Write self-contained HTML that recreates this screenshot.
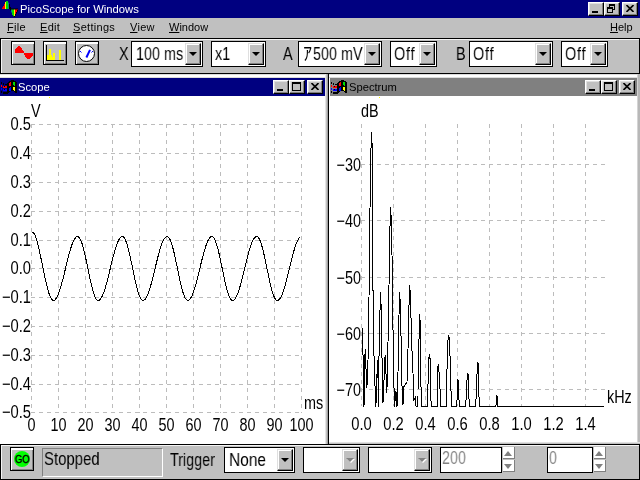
<!DOCTYPE html>
<html><head><meta charset="utf-8"><title>PicoScope for Windows</title>
<style>
html,body{margin:0;padding:0}
body{width:640px;height:480px;overflow:hidden;background:#c0c0c0;position:relative;font-family:"Liberation Sans","Noto Sans CJK JP",sans-serif;color:#000}
div,span,i,svg{position:absolute;box-sizing:content-box}
.sm{font-size:11px;line-height:13px;white-space:nowrap;will-change:transform}
.big{font-size:18px;line-height:20px;white-space:nowrap;transform:scaleX(.8);transform-origin:0 0;will-change:transform}
.menu u{text-decoration:underline;text-decoration-thickness:1px;text-underline-offset:1px}
.tb{background:#c0c0c0;border:1px solid;border-color:#fff #000 #000 #fff;box-shadow:inset -1px -1px 0 #808080,inset 1px 1px 0 #dfdfdf;width:14px;height:12px}
.frame{border:1px solid #000;box-shadow:inset 1px 1px 0 #f4f4f4}
.btn{width:22px;height:22px;border:1px solid #000;background:#c0c0c0;box-shadow:inset 1px 2px 0 #fff,inset -1px -1px 0 #808080}
.combo{border:1px solid #000;background:#fff}
.ddb{width:14px;background:#c0c0c0;border:1px solid;border-color:#dfdfdf #000 #000 #dfdfdf;box-shadow:inset -1px -1px 0 #808080,inset 1px 1px 0 #fff}
.ddb i{left:3px;top:50%;margin-top:-2px;width:0;height:0;border:4px solid transparent;border-top:4px solid #000;border-bottom:0}
.spin{width:12px;height:12px;background:#fff;box-shadow:inset -1px -1px 0 #808080}
.spin i{left:2px;top:3px;width:0;height:0;border:4px solid transparent}
</style></head><body>

<div style="left:0;top:0;width:640px;height:18px;background:#000080"></div>
<svg style="left:0;top:0" width="20" height="18" viewBox="0 0 20 18"><rect x="2" y="7.5" width="1" height="1.5" fill="#f00"/><rect x="3" y="6" width="1" height="3" fill="#f00"/><rect x="4" y="4" width="1" height="5" fill="#f00"/><rect x="5" y="2" width="1" height="7" fill="#ff0"/><rect x="6" y="1" width="1" height="8" fill="#0d0"/><rect x="7" y="1" width="1" height="8" fill="#0d0"/><rect x="8" y="2.5" width="1" height="6.5" fill="#088"/><rect x="9" y="4" width="1" height="5" fill="#000"/><rect x="10" y="7" width="1" height="2" fill="#000"/><rect x="10" y="9" width="1" height="1.5" fill="#000"/><rect x="11" y="9" width="1" height="3.5" fill="#088"/><rect x="12" y="9" width="1" height="6" fill="#0d0"/><rect x="13" y="9" width="1" height="7.5" fill="#0d0"/><rect x="14" y="9" width="1" height="7" fill="#ff0"/><rect x="15" y="9" width="1" height="5" fill="#f00"/><rect x="16" y="9" width="1" height="3" fill="#f00"/><rect x="17" y="9" width="1" height="1" fill="#f00"/><rect x="13" y="16.5" width="1" height="0.5" fill="#000"/><rect x="14" y="16" width="1" height="1" fill="#000"/><rect x="15" y="14" width="1" height="1.5" fill="#000"/><rect x="16" y="12" width="1" height="1.5" fill="#000"/><rect x="17" y="10" width="1" height="1.5" fill="#000"/><rect x="10" y="8.5" width="8" height="1" fill="#000"/></svg>
<span class="sm" style="left:20px;top:3px;color:#fff;font-size:11.25px">PicoScope for Windows</span>
<div class="tb" style="left:588px;top:2px"><div style="left:3px;top:8px;width:6px;height:2px;background:#000"></div></div>
<div class="tb" style="left:604px;top:2px"><div style="left:4px;top:1px;width:4px;height:3px;border:1px solid #000;border-top-width:2px"></div><div style="left:2px;top:4px;width:4px;height:3px;border:1px solid #000;border-top-width:2px;background:#c0c0c0"></div></div>
<div class="tb" style="left:622px;top:2px"><svg style="left:3px;top:2px" width="8" height="7" viewBox="0 0 8 7"><path d="M0.5,0 L7.5,7 M7.5,0 L0.5,7" stroke="#000" stroke-width="1.6"/></svg></div>
<span class="sm menu" style="left:7px;top:21px;letter-spacing:.3px;"><u>F</u>ile</span>
<span class="sm menu" style="left:40px;top:21px;letter-spacing:.3px;"><u>E</u>dit</span>
<span class="sm menu" style="left:73px;top:21px;letter-spacing:.3px;"><u>S</u>ettings</span>
<span class="sm menu" style="left:130px;top:21px;letter-spacing:.3px;"><u>V</u>iew</span>
<span class="sm menu" style="left:169px;top:21px;"><u>W</u>indow</span>
<span class="sm menu" style="left:610px;top:21px;"><u>H</u>elp</span>
<div class="frame" style="left:0;top:38px;width:638px;height:34px"></div>
<div class="btn" style="left:11px;top:41px"><svg style="left:0;top:0" width="22" height="22" viewBox="12 42 22 22" shape-rendering="crispEdges"><path d="M15,53 L15,50 L18,46 L20,46 L24,52 L24,53Z M24,53 L33,53 L33,55 L30,59 L27,59 L24,54Z" fill="#f00"/></svg></div>
<div class="btn" style="left:43px;top:41px"><svg style="left:0;top:0" width="22" height="22" viewBox="44 42 22 22" shape-rendering="crispEdges"><path d="M46.5,45 V60.5 H64" fill="none" stroke="#000" stroke-width="1"/><path d="M47,60 V55 H49 V49 H51 V55 H52 V57 H53 V53 H55 V60Z M59,60 V50 H61 V60Z" fill="#ff0"/></svg></div>
<div class="btn" style="left:75px;top:41px"><svg style="left:0;top:0" width="22" height="22" viewBox="76 42 22 22"><circle cx="86.5" cy="53.5" r="8" fill="#fff" stroke="#000" stroke-width="1"/><path d="M86.4,57.5 L90,49.8" stroke="#00f" stroke-width="2"/><path d="M80,51 L81.5,52.5 M93,51 L91.5,52.5" stroke="#00f" stroke-width="1"/></svg></div>
<span class="big" style="left:119px;top:44px">X</span>
<span class="big" style="left:283px;top:44px">A</span>
<span class="big" style="left:456px;top:44px">B</span>
<div class="combo" style="left:131px;top:41px;width:70px;height:24px"><span class="big" style="left:4px;top:2px;">100 ms</span><div class="ddb" style="left:53px;top:1px;height:20px"><i style="border-top-color:#000"></i></div></div>
<div class="combo" style="left:211px;top:41px;width:53px;height:24px"><span class="big" style="left:3px;top:2px;">x1</span><div class="ddb" style="left:36px;top:1px;height:20px"><i style="border-top-color:#000"></i></div></div>
<div class="combo" style="left:298px;top:41px;width:82px;height:24px"><span class="big" style="left:4px;top:2px;transform:none">ｱ</span><span class="big" style="left:14px;top:2px;">500 mV</span><div class="ddb" style="left:65px;top:1px;height:20px"><i style="border-top-color:#000"></i></div></div>
<div class="combo" style="left:390px;top:41px;width:45px;height:24px"><span class="big" style="left:3px;top:2px;letter-spacing:1px">Off</span><div class="ddb" style="left:28px;top:1px;height:20px"><i style="border-top-color:#000"></i></div></div>
<div class="combo" style="left:469px;top:41px;width:82px;height:24px"><span class="big" style="left:3px;top:2px;letter-spacing:1px">Off</span><div class="ddb" style="left:65px;top:1px;height:20px"><i style="border-top-color:#000"></i></div></div>
<div class="combo" style="left:561px;top:41px;width:45px;height:24px"><span class="big" style="left:3px;top:2px;letter-spacing:1px">Off</span><div class="ddb" style="left:28px;top:1px;height:20px"><i style="border-top-color:#000"></i></div></div>
<div style="left:0;top:74px;width:640px;height:370px;background:#fff"></div>
<div style="left:0;top:74px;width:640px;height:1px;background:#dcdcdc"></div>
<div style="left:0;top:77px;width:640px;height:1px;background:#dcdcdc"></div>
<div style="left:0;top:78px;width:325px;height:18px;background:#000080"></div>
<div style="left:325px;top:74px;width:1px;height:370px;background:#e4e4e4"></div>
<div style="left:326px;top:74px;width:1px;height:370px;background:#c0c0c0"></div>
<div style="left:327px;top:74px;width:1px;height:370px;background:#a0a0a0"></div>
<div style="left:328px;top:74px;width:1px;height:370px;background:#000"></div>
<div style="left:330px;top:78px;width:307px;height:18px;background:#808080"></div>
<div style="left:637px;top:74px;width:1px;height:370px;background:#d4d4d4"></div>
<div style="left:638px;top:74px;width:2px;height:370px;background:#b8b8b8"></div>
<div style="left:329px;top:442px;width:311px;height:1px;background:#e0e0e0"></div>
<div style="left:329px;top:443px;width:311px;height:1px;background:#c0c0c0"></div>
<svg style="left:0px;top:78px" width="18" height="18" viewBox="0 0 18 18" shape-rendering="crispEdges">
<path d="M7,5 L8,4 L10,3 L11,2 L13,2 L15,3 L17,5 L17,16 L16,15 L14,14 L13,13 L11,13 L9,14 L8,15 L7,16 L3,16 L3,15 L7,15Z" fill="#000"/>
<path d="M9,5 L10,4 L11,4 L11,7 L10,8 L9,8Z" fill="#f00"/><path d="M13,4 L14,4 L15,5 L15,8 L14,8 L13,7Z" fill="#0d0"/>
<path d="M9,10 L10,9 L11,9 L11,12 L10,13 L9,13Z" fill="#00f"/><path d="M13,9 L14,9 L15,10 L15,13 L14,13 L13,12Z" fill="#ff0"/>
<rect x="1" y="4" width="1" height="2" fill="#000"/><rect x="1" y="7" width="1" height="2" fill="#f00"/><rect x="1" y="10" width="1" height="2" fill="#00f"/><rect x="1" y="13" width="1" height="2" fill="#000"/>
<rect x="3" y="5" width="1" height="2" fill="#000"/><rect x="5" y="6" width="2" height="1" fill="#000"/>
<rect x="3" y="8" width="4" height="2" fill="#f00"/><rect x="3" y="11" width="4" height="2" fill="#00f"/>
<rect x="4" y="8" width="1" height="1" fill="#000"/><rect x="4" y="11" width="1" height="1" fill="#000"/>
<rect x="3" y="14" width="4" height="2" fill="#000"/>
</svg>
<svg style="left:330px;top:78px" width="18" height="18" viewBox="0 0 18 18" shape-rendering="crispEdges">
<path d="M7,5 L8,4 L10,3 L11,2 L13,2 L15,3 L17,5 L17,16 L16,15 L14,14 L13,13 L11,13 L9,14 L8,15 L7,16 L3,16 L3,15 L7,15Z" fill="#000"/>
<path d="M9,5 L10,4 L11,4 L11,7 L10,8 L9,8Z" fill="#f00"/><path d="M13,4 L14,4 L15,5 L15,8 L14,8 L13,7Z" fill="#0d0"/>
<path d="M9,10 L10,9 L11,9 L11,12 L10,13 L9,13Z" fill="#00f"/><path d="M13,9 L14,9 L15,10 L15,13 L14,13 L13,12Z" fill="#ff0"/>
<rect x="1" y="4" width="1" height="2" fill="#000"/><rect x="1" y="7" width="1" height="2" fill="#f00"/><rect x="1" y="10" width="1" height="2" fill="#00f"/><rect x="1" y="13" width="1" height="2" fill="#000"/>
<rect x="3" y="5" width="1" height="2" fill="#000"/><rect x="5" y="6" width="2" height="1" fill="#000"/>
<rect x="3" y="8" width="4" height="2" fill="#f00"/><rect x="3" y="11" width="4" height="2" fill="#00f"/>
<rect x="4" y="8" width="1" height="1" fill="#000"/><rect x="4" y="11" width="1" height="1" fill="#000"/>
<rect x="3" y="14" width="4" height="2" fill="#000"/>
</svg>
<span class="sm" style="left:18px;top:81px;color:#fff;font-size:11.2px">Scope</span>
<span class="sm" style="left:349px;top:81px;color:#000;font-size:11.2px">Spectrum</span>
<div class="tb" style="left:273px;top:80px"><div style="left:3px;top:8px;width:6px;height:2px;background:#000"></div></div><div class="tb" style="left:289px;top:80px"><div style="left:2px;top:1px;width:7px;height:6px;border:1px solid #000;border-top-width:2px"></div></div><div class="tb" style="left:307px;top:80px"><svg style="left:3px;top:2px" width="8" height="7" viewBox="0 0 8 7"><path d="M0.5,0 L7.5,7 M7.5,0 L0.5,7" stroke="#000" stroke-width="1.6"/></svg></div>
<div class="tb" style="left:585px;top:80px"><div style="left:3px;top:8px;width:6px;height:2px;background:#000"></div></div><div class="tb" style="left:601px;top:80px"><div style="left:2px;top:1px;width:7px;height:6px;border:1px solid #000;border-top-width:2px"></div></div><div class="tb" style="left:619px;top:80px"><svg style="left:3px;top:2px" width="8" height="7" viewBox="0 0 8 7"><path d="M0.5,0 L7.5,7 M7.5,0 L0.5,7" stroke="#000" stroke-width="1.6"/></svg></div>
<div style="left:49px;top:97px;width:1px;height:1px;background:#ff0"></div>
<div style="left:379px;top:97px;width:1px;height:1px;background:#ff0"></div>
<svg style="left:0;top:0;will-change:transform" width="640" height="480" viewBox="0 0 640 480" font-family="Liberation Sans, sans-serif" font-size="18" fill="#000">
<g stroke="#bcbcbc" stroke-width="1" stroke-dasharray="4 4" shape-rendering="crispEdges" fill="none">
<path d="M31,124.5 H302"/>
<path d="M31,153.5 H302"/>
<path d="M31,182.5 H302"/>
<path d="M31,211.5 H302"/>
<path d="M31,240.5 H302"/>
<path d="M31,268.5 H302"/>
<path d="M31,297.5 H302"/>
<path d="M31,326.5 H302"/>
<path d="M31,355.5 H302"/>
<path d="M31,384.5 H302"/>
<path d="M31,412.5 H302"/>
<path d="M31.5,124 V413"/>
<path d="M58.5,124 V413"/>
<path d="M85.5,124 V413"/>
<path d="M112.5,124 V413"/>
<path d="M139.5,124 V413"/>
<path d="M166.5,124 V413"/>
<path d="M193.5,124 V413"/>
<path d="M220.5,124 V413"/>
<path d="M247.5,124 V413"/>
<path d="M274.5,124 V413"/>
<path d="M301.5,124 V413"/>
<path d="M361.5,124 V406"/>
<path d="M393.5,124 V406"/>
<path d="M425.5,124 V406"/>
<path d="M457.5,124 V406"/>
<path d="M489.5,124 V406"/>
<path d="M521.5,124 V406"/>
<path d="M553.5,124 V406"/>
<path d="M585.5,124 V406"/>
<path d="M361,164.5 H605"/>
<path d="M361,220.5 H605"/>
<path d="M361,277.5 H605"/>
<path d="M361,333.5 H605"/>
<path d="M361,389.5 H605"/>
</g>
<text transform="translate(31,130) scale(0.82,1)" text-anchor="end">0.5</text>
<text transform="translate(31,159) scale(0.82,1)" text-anchor="end">0.4</text>
<text transform="translate(31,188) scale(0.82,1)" text-anchor="end">0.3</text>
<text transform="translate(31,217) scale(0.82,1)" text-anchor="end">0.2</text>
<text transform="translate(31,246) scale(0.82,1)" text-anchor="end">0.1</text>
<text transform="translate(31,274) scale(0.82,1)" text-anchor="end">0.0</text>
<text transform="translate(31,303) scale(0.82,1)" text-anchor="end">−0.1</text>
<text transform="translate(31,332) scale(0.82,1)" text-anchor="end">−0.2</text>
<text transform="translate(31,361) scale(0.82,1)" text-anchor="end">−0.3</text>
<text transform="translate(31,390) scale(0.82,1)" text-anchor="end">−0.4</text>
<text transform="translate(31,418) scale(0.82,1)" text-anchor="end">−0.5</text>
<text transform="translate(31.5,431) scale(0.8,1)" text-anchor="middle">0</text>
<text transform="translate(58.5,431) scale(0.8,1)" text-anchor="middle">10</text>
<text transform="translate(85.5,431) scale(0.8,1)" text-anchor="middle">20</text>
<text transform="translate(112.5,431) scale(0.8,1)" text-anchor="middle">30</text>
<text transform="translate(139.5,431) scale(0.8,1)" text-anchor="middle">40</text>
<text transform="translate(166.5,431) scale(0.8,1)" text-anchor="middle">50</text>
<text transform="translate(193.5,431) scale(0.8,1)" text-anchor="middle">60</text>
<text transform="translate(220.5,431) scale(0.8,1)" text-anchor="middle">70</text>
<text transform="translate(247.5,431) scale(0.8,1)" text-anchor="middle">80</text>
<text transform="translate(274.5,431) scale(0.8,1)" text-anchor="middle">90</text>
<text transform="translate(301.5,431) scale(0.8,1)" text-anchor="middle">100</text>
<text transform="translate(31,117) scale(0.8,1)" text-anchor="start">V</text>
<text transform="translate(304,409) scale(0.8,1)" text-anchor="start">ms</text>
<polyline fill="none" stroke="#000" stroke-width="1" shape-rendering="crispEdges" points="31.5,232.0 32.5,232.1 33.5,232.8 34.5,234.3 35.5,236.4 36.5,239.3 37.5,242.7 38.5,246.7 39.5,251.3 40.5,256.1 41.5,260.8 42.5,265.6 43.5,270.5 44.5,275.3 45.5,280.0 46.5,284.4 47.5,288.4 48.5,292.0 49.5,295.0 50.5,297.4 51.5,299.2 52.5,300.2 53.5,300.5 54.5,300.2 55.5,299.3 56.5,297.9 57.5,296.1 58.5,293.7 59.5,291.0 60.5,287.8 61.5,284.4 62.5,280.6 63.5,276.7 64.5,272.6 65.5,268.5 66.5,264.3 67.5,260.2 68.5,256.3 69.5,252.6 70.5,249.1 71.5,246.0 72.5,243.2 73.5,240.9 74.5,239.0 75.5,237.7 76.5,236.8 77.5,236.5 78.5,236.8 79.5,237.9 80.5,239.6 81.5,242.0 82.5,245.1 83.5,248.7 84.5,252.7 85.5,257.1 86.5,261.8 87.5,266.6 88.5,271.5 89.5,276.3 90.5,280.9 91.5,285.3 92.5,289.2 93.5,292.7 94.5,295.6 95.5,297.9 96.5,299.5 97.5,300.3 98.5,300.5 99.5,300.0 100.5,299.1 101.5,297.6 102.5,295.6 103.5,293.2 104.5,290.3 105.5,287.1 106.5,283.6 107.5,279.8 108.5,275.8 109.5,271.7 110.5,267.5 111.5,263.4 112.5,259.4 113.5,255.5 114.5,251.8 115.5,248.4 116.5,245.3 117.5,242.7 118.5,240.4 119.5,238.7 120.5,237.4 121.5,236.7 122.5,236.5 123.5,237.0 124.5,238.2 125.5,240.1 126.5,242.7 127.5,245.8 128.5,249.5 129.5,253.7 130.5,258.1 131.5,262.9 132.5,267.7 133.5,272.6 134.5,277.4 135.5,281.9 136.5,286.2 137.5,290.0 138.5,293.4 139.5,296.1 140.5,298.3 141.5,299.7 142.5,300.4 143.5,300.4 144.5,299.9 145.5,298.8 146.5,297.2 147.5,295.1 148.5,292.6 149.5,289.6 150.5,286.3 151.5,282.7 152.5,278.9 153.5,274.9 154.5,270.8 155.5,266.6 156.5,262.5 157.5,258.5 158.5,254.6 159.5,251.0 160.5,247.7 161.5,244.7 162.5,242.1 163.5,240.0 164.5,238.4 165.5,237.2 166.5,236.6 167.5,236.5 168.5,237.2 169.5,238.6 170.5,240.6 171.5,243.3 172.5,246.6 173.5,250.4 174.5,254.6 175.5,259.2 176.5,263.9 177.5,268.8 178.5,273.7 179.5,278.4 180.5,282.9 181.5,287.1 182.5,290.8 183.5,294.0 184.5,296.7 185.5,298.7 186.5,299.9 187.5,300.5 188.5,300.3 189.5,299.7 190.5,298.5 191.5,296.8 192.5,294.6 193.5,291.9 194.5,288.9 195.5,285.6 196.5,281.9 197.5,278.0 198.5,274.0 199.5,269.9 200.5,265.7 201.5,261.6 202.5,257.6 203.5,253.8 204.5,250.3 205.5,247.0 206.5,244.1 207.5,241.6 208.5,239.6 209.5,238.1 210.5,237.0 211.5,236.5 212.5,236.6 213.5,237.4 214.5,238.9 215.5,241.2 216.5,244.0 217.5,247.4 218.5,251.3 219.5,255.6 220.5,260.2 221.5,265.0 222.5,269.9 223.5,274.7 224.5,279.4 225.5,283.8 226.5,287.9 227.5,291.6 228.5,294.7 229.5,297.2 230.5,299.0 231.5,300.1 232.5,300.5 233.5,300.2 234.5,299.4 235.5,298.1 236.5,296.3 237.5,294.0 238.5,291.3 239.5,288.2 240.5,284.8 241.5,281.1 242.5,277.2 243.5,273.1 244.5,269.0 245.5,264.8 246.5,260.7 247.5,256.8 248.5,253.0 249.5,249.5 250.5,246.3 251.5,243.5 252.5,241.1 253.5,239.2 254.5,237.8 255.5,236.9 256.5,236.5 257.5,236.7 258.5,237.7 259.5,239.4 260.5,241.7 261.5,244.7 262.5,248.2 263.5,252.2 264.5,256.6 265.5,261.2 266.5,266.1 267.5,270.9 268.5,275.8 269.5,280.4 270.5,284.8 271.5,288.8 272.5,292.3 273.5,295.3 274.5,297.6 275.5,299.3 276.5,300.3 277.5,300.5 278.5,300.1 279.5,299.2 280.5,297.8 281.5,295.9 282.5,293.5 283.5,290.7 284.5,287.5 285.5,284.0 286.5,280.2 287.5,276.3 288.5,272.2 289.5,268.0 290.5,263.9 291.5,259.8 292.5,255.9 293.5,252.2 294.5,248.8 295.5,245.7 296.5,243.0 297.5,240.7 298.5,238.9 299.5,237.6 300.5,236.8"/>
<text transform="translate(361,171) scale(0.8,1)" text-anchor="end">−30</text>
<text transform="translate(361,227) scale(0.8,1)" text-anchor="end">−40</text>
<text transform="translate(361,284) scale(0.8,1)" text-anchor="end">−50</text>
<text transform="translate(361,340) scale(0.8,1)" text-anchor="end">−60</text>
<text transform="translate(361,396) scale(0.8,1)" text-anchor="end">−70</text>
<text transform="translate(361.5,430) scale(0.82,1)" text-anchor="middle">0.0</text>
<text transform="translate(393.5,430) scale(0.82,1)" text-anchor="middle">0.2</text>
<text transform="translate(425.5,430) scale(0.82,1)" text-anchor="middle">0.4</text>
<text transform="translate(457.5,430) scale(0.82,1)" text-anchor="middle">0.6</text>
<text transform="translate(489.5,430) scale(0.82,1)" text-anchor="middle">0.8</text>
<text transform="translate(521.5,430) scale(0.82,1)" text-anchor="middle">1.0</text>
<text transform="translate(553.5,430) scale(0.82,1)" text-anchor="middle">1.2</text>
<text transform="translate(585.5,430) scale(0.82,1)" text-anchor="middle">1.4</text>
<text transform="translate(361,117) scale(0.8,1)" text-anchor="start">dB</text>
<text transform="translate(607,403) scale(0.8,1)" text-anchor="start">kHz</text>
<polyline fill="none" stroke="#000" stroke-width="1" shape-rendering="crispEdges" stroke-linejoin="miter" points="362.5,328.5 364.0,406.5 365.1,349.5 366.9,387.5 368.0,360.5 369.0,297.5 370.0,208.5 371.0,148.5 371.5,132.5 372.0,140.5 373.0,290.5 374.0,355.5 375.0,385.5 375.9,406.5 377.5,360.5 378.9,406.5 379.0,356.5 380.0,310.5 380.5,292.5 381.0,303.5 382.0,357.5 383.0,402.5 385.1,355.5 386.9,392.5 388.0,342.5 389.0,285.5 390.0,226.5 390.5,207.5 391.0,214.5 392.0,254.5 393.0,329.5 394.0,387.5 394.5,406.5 396.0,391.5 397.0,406.5 398.0,372.5 399.0,315.5 399.5,292.5 400.0,298.5 401.0,335.5 402.0,385.5 403.0,404.5 404.0,386.5 407.5,381.5 408.0,349.5 409.0,305.5 409.5,285.5 410.0,289.5 411.0,317.5 412.0,350.5 413.0,372.5 413.3,400.5 415.2,397.5 416.1,406.5 418.0,406.5 418.1,339.5 419.0,339.5 419.5,314.5 420.1,320.5 421.0,386.5 421.8,406.5 427.5,406.5 428.0,384.5 429.0,357.5 429.9,354.5 430.5,375.5 431.0,400.5 431.7,406.5 437.5,406.5 437.8,366.5 438.5,364.5 439.9,384.5 440.5,406.5 446.1,406.5 447.0,369.5 448.0,340.5 448.9,335.5 450.0,355.5 451.0,390.5 451.3,406.5 456.7,406.5 458.0,379.5 459.3,406.5 465.7,406.5 467.0,380.5 468.0,373.5 469.3,406.5 475.7,406.5 477.0,374.5 478.0,362.5 479.3,406.5 495.9,406.5 497.0,395.5 498.0,406.5 603.5,406.5"/>
</svg>
<div style="left:0;top:444px;width:640px;height:36px;background:#c0c0c0"></div>
<div class="frame" style="left:0;top:444px;width:638px;height:34px"></div>
<div class="btn" style="left:10px;top:447px"><div style="left:3px;top:3px;width:16px;height:16px;border-radius:50%;background:#0f0"></div><span style="left:4px;top:5px;font-size:11px;line-height:12px;transform:scaleX(.86);transform-origin:0 0;-webkit-text-stroke:.3px #000">GO</span></div>
<div style="left:42px;top:448px;width:119px;height:27px;background:#c0c0c0;border:1px solid;border-color:#808080 #fff #fff #808080"><span class="big" style="left:1px;top:0px;transform:scaleX(.83)">Stopped</span></div>
<span class="big" style="left:170px;top:450px">Trigger</span>
<div class="combo" style="left:224px;top:447px;width:69px;height:24px"><span class="big" style="left:4px;top:2px;transform:scaleX(.86)">None</span><div class="ddb" style="left:52px;top:1px;height:20px"><i style="border-top-color:#000"></i></div></div>
<div class="combo" style="left:303px;top:447px;width:55px;height:24px"><div class="ddb" style="left:38px;top:1px;height:20px"><i style="border-top-color:#fff;margin-left:1px;margin-top:-1px"></i><i style="border-top-color:#808080"></i></div></div>
<div class="combo" style="left:368px;top:447px;width:62px;height:24px"><div class="ddb" style="left:45px;top:1px;height:20px"><i style="border-top-color:#fff;margin-left:1px;margin-top:-1px"></i><i style="border-top-color:#808080"></i></div></div>
<div class="combo" style="left:440px;top:447px;width:60px;height:24px"><span class="big" style="left:1px;top:0px;color:#808080">200</span></div>
<div class="combo" style="left:547px;top:447px;width:44px;height:24px"><span class="big" style="left:1px;top:0px;color:#808080">0</span></div>
<div class="spin" style="left:503px;top:447px"><i style="border-bottom:5px solid #808080;border-top:0;top:4px;left:1px"></i></div>
<div class="spin" style="left:503px;top:460px"><i style="border-top:5px solid #808080;border-bottom:0;top:4px;left:1px"></i></div>
<div class="spin" style="left:594px;top:447px"><i style="border-bottom:5px solid #808080;border-top:0;top:4px;left:1px"></i></div>
<div class="spin" style="left:594px;top:460px"><i style="border-top:5px solid #808080;border-bottom:0;top:4px;left:1px"></i></div>
</body></html>
